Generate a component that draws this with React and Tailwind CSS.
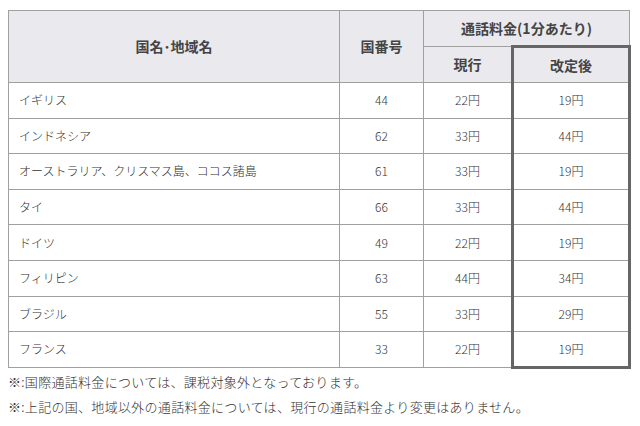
import React from "react";

const rows = [
  ["イギリス", "44", "22円", "19円"],
  ["インドネシア", "62", "33円", "44円"],
  ["オーストラリア、クリスマス島、ココス諸島", "61", "33円", "19円"],
  ["タイ", "66", "33円", "44円"],
  ["ドイツ", "49", "22円", "19円"],
  ["フィリピン", "63", "44円", "34円"],
  ["ブラジル", "55", "33円", "29円"],
  ["フランス", "33", "22円", "19円"],
];

export default function App() {
  return (
    <div
      className="w-[640px] h-[426px] bg-white text-[#333] text-[12px] pt-[10px] pl-[8px]"
      style={{ fontFamily: '"Noto Sans CJK JP", "Noto Sans", sans-serif' }}
    >
      <table className="w-[621px] border-collapse table-fixed">
        <colgroup>
          <col className="w-[331px]" />
          <col className="w-[84px]" />
          <col className="w-[89px]" />
          <col className="w-[117px]" />
        </colgroup>
        <thead>
          <tr className="h-[36px]">
            <th rowSpan={2} className="border border-[#a0a0a0] bg-[#e9e9ee] font-bold text-[14px] text-[#444]">
              国名･地域名
            </th>
            <th rowSpan={2} className="border border-[#a0a0a0] bg-[#e9e9ee] font-bold text-[14px] text-[#444]">
              国番号
            </th>
            <th colSpan={2} className="border border-[#a0a0a0] bg-[#e9e9ee] font-bold text-[14px] text-[#444]">
              通話料金(1分あたり)
            </th>
          </tr>
          <tr className="h-[36px]">
            <th className="border border-[#a0a0a0] bg-[#e9e9ee] font-bold text-[14px] text-[#444]">現行</th>
            <th className="border-[3px] border-b-[#a0a0a0] border-b border-[#666] bg-[#e9e9ee] font-bold text-[14px] text-[#444]">
              改定後
            </th>
          </tr>
        </thead>
        <tbody>
          {rows.map((r, i) => (
            <tr key={i} className="h-[35.6px]">
              <td className="border border-[#a0a0a0] pl-[10px] font-light">{r[0]}</td>
              <td className="border border-[#a0a0a0] text-center font-light">{r[1]}</td>
              <td className="border border-[#a0a0a0] text-center font-light">{r[2]}</td>
              <td
                className={
                  i === rows.length - 1
                    ? "border border-[#a0a0a0] border-x-[3px] border-x-[#666] border-b-[3px] border-b-[#666] text-center font-light"
                    : "border border-[#a0a0a0] border-x-[3px] border-x-[#666] text-center font-light"
                }
              >
                {r[3]}
              </td>
            </tr>
          ))}
        </tbody>
      </table>
      <p className="text-[13px] tracking-[0.3px] leading-[25px] font-light">※:国際通話料金については、課税対象外となっております。</p>
      <p className="text-[13px] tracking-[0.3px] leading-[25px] font-light">※:上記の国、地域以外の通話料金については、現行の通話料金より変更はありません。</p>
    </div>
  );
}
